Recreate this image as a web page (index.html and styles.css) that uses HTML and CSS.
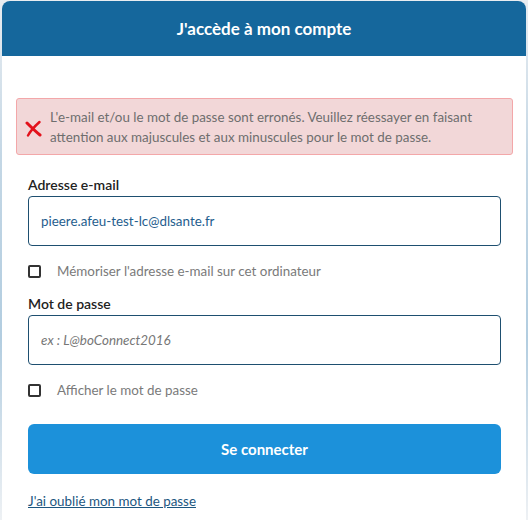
FILE: index.html
```html
<!DOCTYPE html>
<html lang="fr">
<head>
    <meta charset="UTF-8">
    <meta name="viewport" content="width=device-width, initial-scale=1.0">
    <title>J'accède à mon compte</title>
    <link rel="stylesheet" href="styles.css">
</head>
<body>
    <div class="card">
        <div class="card-header">
            <h1>J'accède à mon compte</h1>
        </div>
        <div class="card-body">
            <div class="alert">
                <svg class="alert-icon" width="17" height="17" viewBox="0 0 17 17">
                    <path d="M2 3 C6 7, 10 11, 15 15" stroke="#e3121c" stroke-width="3" fill="none" stroke-linecap="round"/>
                    <path d="M14.5 2 C10 6, 6 10, 3 15.5" stroke="#e3121c" stroke-width="2.4" fill="none" stroke-linecap="round"/>
                </svg>
                <p>L'e-mail et/ou le mot de passe sont erronés. Veuillez réessayer en faisant attention aux majuscules et aux minuscules pour le mot de passe.</p>
            </div>

            <form class="login-form" onsubmit="return false;">
                <label class="field-label" for="email">Adresse e-mail</label>
                <input class="field-input" id="email" type="text" value="pieere.afeu-test-lc@dlsante.fr">

                <label class="check-row">
                    <input type="checkbox">
                    <span>Mémoriser l'adresse e-mail sur cet ordinateur</span>
                </label>

                <label class="field-label" for="password">Mot de passe</label>
                <input class="field-input" id="password" type="password" placeholder="ex : L@boConnect2016">

                <label class="check-row">
                    <input type="checkbox">
                    <span>Afficher le mot de passe</span>
                </label>

                <button class="submit-btn" type="submit">Se connecter</button>

                <a class="forgot-link" href="#">J'ai oublié mon mot de passe</a>
            </form>
        </div>
    </div>
</body>
</html>
```

FILE: styles.css
```css
body {
    margin: 0;
    font-family: Lato, "Open Sans", sans-serif;
    background: linear-gradient(to bottom, #e9edf1 0%, #c4d7e5 30%, #b2cde0 65%, #eef1f4 100%);
    min-height: 520px;
}
.card {
    margin: 1px 2px 0 2px;
    width: 524px;
    background: white;
    border-radius: 8px 8px 0 0;
    min-height: 519px;
}
.card-header {
    height: 55px;
    background: #15679c;
    border-radius: 8px 8px 0 0;
    display: flex;
    align-items: center;
    justify-content: center;
}
.card-header h1 {
    margin: 0;
    color: white;
    font-size: 17px;
    font-weight: 700;
}
.card-body {
    padding: 42px 13px 0 14px;
}
.alert {
    display: flex;
    align-items: center;
    gap: 8px;
    background: #f2d7d8;
    border: 1px solid #f3a7a9;
    border-radius: 3px;
    padding: 8px 10px 7px 8px;
}
.alert-icon {
    flex-shrink: 0;
    margin-top: 2px;
}
.alert p {
    margin: 0;
    color: #6e6e6e;
    font-size: 13.4px;
    line-height: 20px;
}
.login-form {
    padding: 21px 12px 0 12px;
    display: flex;
    flex-direction: column;
}
.field-label {
    font-size: 14px;
    font-weight: 600;
    color: #222;
    line-height: 18px;
    margin-bottom: 2px;
}
.field-input {
    box-sizing: border-box;
    height: 50px;
    width: 100%;
    border: 1px solid #1e4f70;
    border-radius: 4px;
    padding: 0 12px;
    font-family: inherit;
    font-size: 13.4px;
    color: #1f5e8e;
    outline: none;
}
.field-input::placeholder {
    color: #777;
    font-style: italic;
}
.check-row {
    display: flex;
    align-items: center;
    gap: 16px;
    margin: 15px 0 14px 0;
    line-height: 20px;
    font-size: 13.4px;
    color: #7a7a7a;
}
.check-row input {
    appearance: none;
    margin: 0;
    width: 13px;
    height: 13px;
    border: 2px solid #333;
    border-radius: 2px;
}
.submit-btn {
    margin-top: 10px;
    height: 50px;
    background: #1c91da;
    color: white;
    border: none;
    border-radius: 6px;
    font-family: inherit;
    font-size: 15px;
    font-weight: 700;
    cursor: pointer;
}
.forgot-link {
    margin-top: 17px;
    align-self: flex-start;
    color: #1c5680;
    font-size: 13.4px;
    line-height: 20px;
}
```
